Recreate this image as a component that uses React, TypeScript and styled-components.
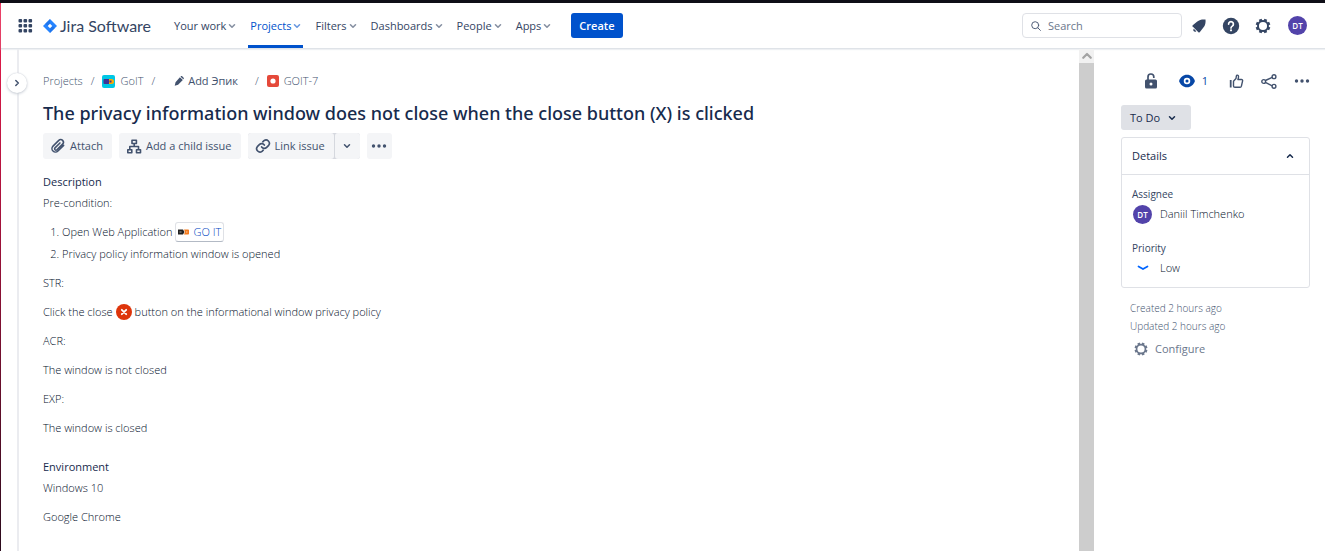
import React from "react";
import styled, { createGlobalStyle, css } from "styled-components";

const GlobalStyle = createGlobalStyle`
  *, *::before, *::after { box-sizing: border-box; }
  body { margin: 0; background: #fff; color: #172b4d; font: 11px/20px "Open Sans", "Noto Sans", sans-serif; }
  button, input { font: inherit; color: inherit; margin: 0; }
  button { border: 0; background: none; padding: 0; cursor: pointer; }
  a { color: inherit; text-decoration: none; }
  h1, h2, p, ol, dl, dd, dt { margin: 0; padding: 0; }
  svg { display: block; flex: none; }
`;

const Frame = styled.div`
  display: grid;
  grid-template-columns: 1px minmax(0, 1fr);
  grid-template-rows: 3px auto;
  min-height: 100vh;
`;
const TopEdge = styled.div`
  grid-column: 1 / -1;
  background: #0f0e17;
`;
const SideEdge = styled.div`
  background: linear-gradient(#ec1c4b, #b81440 30%, #2a0a1c);
`;
const Page = styled.div`
  display: flex;
  flex-direction: column;
`;

const Header = styled.header`
  display: flex;
  align-items: center;
  height: 46px;
  padding: 0 18px 0 17px;
  border-bottom: 1px solid #dfe3e8;
  box-shadow: 0 1px 1px #eef0f3;
  color: #344563;
`;
const Logo = styled.a`
  display: flex;
  align-items: center;
  gap: 3px;
  margin: 0 16px 0 10px;
  color: #344563;
  font: 16px/20px Lato, "Open Sans", sans-serif;
`;
const Nav = styled.nav`
  display: flex;
  align-self: stretch;
`;
const NavItem = styled.button<{ $active?: boolean }>`
  display: flex;
  align-items: center;
  gap: 2px;
  margin: 0 5px;
  padding: 0 2px;
  font-weight: 500;
  white-space: nowrap;
  border-top: 3px solid transparent;
  border-bottom: 3px solid transparent;
  ${(p) => p.$active && css`
    color: #0052cc;
    border-bottom-color: #0052cc;
  `}
  svg { opacity: 0.6; }
`;
const CreateButton = styled.button`
  height: 25px;
  margin-left: 13px;
  padding: 0 8px;
  border-radius: 3px;
  background: #0052cc;
  color: #fff;
  font-weight: 600;
`;
const SearchBox = styled.label`
  display: flex;
  align-items: center;
  gap: 7px;
  width: 160px;
  height: 25px;
  margin-left: auto;
  padding: 0 8px;
  border: 1px solid #dfe1e6;
  border-radius: 4px;
  color: #505f79;
  input {
    flex: 1;
    min-width: 0;
    padding: 0;
    border: 0;
    outline: 0;
    background: none;
  }
  input::placeholder { color: #6b778c; opacity: 1; }
`;
const HeaderIcons = styled.div`
  display: flex;
  align-items: center;
  gap: 14px;
  margin-left: 8px;
`;
const ProfileButton = styled.button`
  margin-left: 2px;
`;
const Avatar = styled.span`
  display: grid;
  place-items: center;
  flex: none;
  width: 19px;
  height: 19px;
  border-radius: 50%;
  background: #5243aa;
  color: #fff;
  font-size: 8px;
  font-weight: 600;
  line-height: 19px;
`;

const Body = styled.div`
  display: flex;
  flex: 1;
`;
const Rail = styled.div`
  position: relative;
  flex: none;
  width: 18px;
  border-right: 2px solid #ebecf0;
`;
const ExpandButton = styled.button`
  position: absolute;
  top: 24px;
  right: -10px;
  display: grid;
  place-items: center;
  width: 20px;
  height: 20px;
  border-radius: 50%;
  background: #fff;
  box-shadow: 0 0 1px #c1c7d0, 0 1px 3px #c9ced6;
  color: #42526e;
`;
const Issue = styled.main`
  flex: 1;
  min-width: 0;
  padding: 22px 24px 20px;
`;
const Breadcrumbs = styled.nav`
  display: flex;
  align-items: center;
  height: 20px;
  color: #42526e;
  font-weight: 300;
`;
const Crumb = styled.a`
  display: flex;
  align-items: center;
  gap: 5px;
`;
const Slash = styled.span`
  margin: 0 8px;
`;
const AddEpic = styled.button`
  display: flex;
  align-items: center;
  gap: 4px;
  margin: 0 9px 0 11px;
  color: #42526e;
  font-weight: 500;
`;
const Title = styled.h1`
  margin: 10px 0 8px;
  font-family: "Noto Sans", "Open Sans", sans-serif;
  font-size: 18px;
  font-weight: 500;
  line-height: 24px;
`;
const Toolbar = styled.div`
  display: flex;
  gap: 7px;
  margin-bottom: 13px;
`;
const ToolButton = styled.button<{ $iconOnly?: boolean }>`
  display: flex;
  align-items: center;
  justify-content: center;
  gap: 4px;
  min-width: 25px;
  height: 26px;
  padding: ${(p) => (p.$iconOnly ? "0 4px" : "0 9px 0 7px")};
  border-radius: 3px;
  background: #f4f5f7;
  color: #42526e;
  font-weight: 500;
  white-space: nowrap;
`;
const Split = styled.div`
  display: flex;
  gap: 1px;
  border-radius: 3px;
  background: #d5d8de;
`;
const SectionTitle = styled.h2`
  font-size: 11px;
  font-weight: 500;
  line-height: 20px;
`;
const Section = styled.section`
  & + & { margin-top: 19px; }
`;
const Rich = styled.div`
  display: grid;
  gap: 9px;
  margin-top: 1px;
  color: #04102b;
  font-weight: 300;
`;
const Steps = styled.ol`
  display: grid;
  gap: 2px;
  padding-left: 19px;
`;
const InlineRow = styled.p`
  display: flex;
  align-items: center;
  gap: 3px;
`;
const SmartLink = styled.a`
  display: inline-flex;
  align-items: center;
  gap: 4px;
  padding: 0 2px;
  border: 1px solid #dfe1e6;
  border-bottom-color: #b3bac5;
  border-radius: 3px;
  line-height: 18px;
  color: #0047c2;
`;

const Scrollbar = styled.div`
  flex: none;
  width: 15px;
  background: #cdcdcd;
`;
const ScrollArrow = styled.div`
  display: grid;
  place-items: center;
  height: 14px;
  background: #f1f1f1;
  color: #a3a3a3;
`;

const Aside = styled.aside`
  flex: none;
  width: 231px;
  padding: 22px 15px 0 27px;
`;
const Actions = styled.div`
  display: flex;
  align-items: center;
  justify-content: flex-end;
  gap: 17px;
  height: 20px;
  color: #42526e;
`;
const Watch = styled.button`
  display: flex;
  align-items: center;
  gap: 7px;
  margin: 0 4px;
  color: #0747a6;
`;
const Status = styled.button`
  display: flex;
  align-items: center;
  gap: 8px;
  height: 25px;
  margin: 14px 0 7px;
  padding: 0 15px 0 9px;
  border-radius: 3px;
  background: #dfe1e6;
  font-weight: 500;
`;
const Card = styled.section`
  border: 1px solid #dfe1e6;
  border-radius: 3px;
`;
const CardHead = styled.button`
  display: flex;
  align-items: center;
  justify-content: space-between;
  width: 100%;
  height: 37px;
  padding: 0 15px 0 10px;
  border-bottom: 1px solid #dfe1e6;
  font-weight: 500;
`;
const Fields = styled.dl`
  display: grid;
  gap: 14px;
  padding: 9px 10px;
`;
const FieldName = styled.dt`
  color: #344563;
  font-size: 10px;
  font-weight: 400;
`;
const FieldValue = styled.dd`
  display: flex;
  align-items: center;
  gap: 8px;
  padding-left: 1px;
  color: #04102b;
  font-weight: 300;
`;
const PriorityIcon = styled.span`
  display: grid;
  place-items: center;
  width: 19px;
`;
const Meta = styled.div`
  padding: 11px 9px 0;
  color: #42526e;
  font-size: 10px;
  font-weight: 300;
  line-height: 18px;
`;
const Configure = styled.button`
  display: flex;
  align-items: center;
  gap: 6px;
  margin-top: 4px;
  padding-left: 3px;
  color: #6b778c;
  font-size: 11px;
  line-height: 20px;
  font-weight: 500;
`;

const Chevron = ({ turn = 0, size = 8 }: { turn?: number; size?: number }) => (
  <svg width={size} height={size} viewBox="0 0 8 8" fill="none" stroke="currentColor" strokeWidth="1.5" strokeLinecap="round" strokeLinejoin="round">
    <path d="M1.500 2.800 4 5.300l2.500-2.500" transform={`rotate(${turn} 4 4)`} />
  </svg>
);
const Grid = () => (
  <svg width="15" height="14" viewBox="0 0 15 14" fill="currentColor">
    {[0, 5, 10].map((y) => [0, 5, 10].map((x) => <rect key={`${x}-${y}`} x={x + 0.5} y={y} width="3.600" height="3.600" rx="1" />))}
  </svg>
);
const JiraMark = () => (
  <svg width="14" height="14" viewBox="0 0 14 14">
    <path d="M7 0 14 7 7 14 0 7z" fill="#2684ff" />
    <path d="M7 0v4.500L4.500 7 2.200 4.800z" fill="#1868db" opacity=".5" />
    <path d="M7 14V9.500L9.500 7l2.300 2.200z" fill="#1868db" opacity=".5" />
    <path d="M7 4.700 9.300 7 7 9.300 4.700 7z" fill="#fff" />
  </svg>
);
const SearchIcon = () => (
  <svg width="10" height="10" viewBox="0 0 10 10" fill="none" stroke="currentColor" strokeLinecap="round">
    <circle cx="4.200" cy="4.200" r="3.500" />
    <path d="m6.800 6.800 2.600 2.600" />
  </svg>
);
const Bell = () => (
  <svg width="18" height="18" viewBox="0 0 18 18" fill="currentColor">
    <path d="M15.500 2.500c-3.200-.3-6.200.2-8.200 2L3 8c-.9.800-.7 1.700.2 2.100l4.700 4.700c.4.900 1.300 1 2 .1l3.500-4.300c1.800-2 2.500-4.900 2.100-8.100zM3.800 11.700l2.500 2.500c-.8.700-1.800.7-2.400.1-.7-.6-.8-1.800-.1-2.600z" />
  </svg>
);
const Help = () => (
  <svg width="18" height="18" viewBox="0 0 18 18">
    <circle cx="9" cy="9" r="8.200" fill="currentColor" />
    <path d="M6.600 7.100a2.400 2.400 0 1 1 3.700 2c-.8.500-1.300.9-1.300 1.800" fill="none" stroke="#fff" strokeWidth="1.700" strokeLinecap="round" />
    <circle cx="9" cy="13.300" r="1.100" fill="#fff" />
  </svg>
);
const Gear = ({ size = 18 }: { size?: number }) => (
  <svg width={size} height={size} viewBox="0 0 18 18" fill="none" stroke="currentColor">
    <circle cx="9" cy="9" r="5" strokeWidth="1.900" />
    {[22.5, 67.5, 112.5, 157.5, 202.5, 247.5, 292.5, 337.5].map((a) => (
      <path key={a} d="M9 1.700v2.500" strokeWidth="3" transform={`rotate(${a} 9 9)`} />
    ))}
  </svg>
);
const ProjectIcon = () => (
  <svg width="13" height="13" viewBox="0 0 13 13">
    <rect width="13" height="13" rx="2" fill="#00c7e5" />
    <rect x="1.500" y="4" width="6" height="5" rx="1" fill="#403294" />
    <path d="M7 4h2.500a2.500 2.500 0 0 1 0 5H7z" fill="#ffab00" />
    <rect x="7.500" y="5.500" width="2" height="2" fill="#403294" />
  </svg>
);
const Pencil = () => (
  <svg width="10" height="10" viewBox="0 0 11 11" fill="currentColor">
    <path d="m6.500 1.300 3.200 3.200-5.200 5.200-3.700 1 .9-3.900zM7.200.700l.4-.3c.5-.4 1-.4 1.400 0l1.600 1.500c.4.400.4.900 0 1.400l-.4.400z" />
  </svg>
);
const BugIcon = () => (
  <svg width="12" height="12" viewBox="0 0 12 12">
    <rect width="12" height="12" rx="2" fill="#e5493a" />
    <circle cx="6" cy="6" r="2.600" fill="#fff" />
  </svg>
);
const Clip = () => (
  <svg width="16" height="16" viewBox="0 0 24 24" fill="none" stroke="currentColor" strokeWidth="2.300" strokeLinecap="round" strokeLinejoin="round">
    <path d="m20.500 11-8.600 8.600a5.200 5.200 0 0 1-7.400-7.400l8.700-8.700a4 4 0 0 1 5.700 5.700l-8.500 8.500a2 2 0 0 1-2.900-2.900l7.400-7.400" />
  </svg>
);
const Tree = () => (
  <svg width="16" height="15" viewBox="0 0 16 15" fill="none" stroke="currentColor" strokeWidth="1.600" strokeLinejoin="round">
    <path d="M6 1.200h4.400v3.300H6zM1.800 10.700h4v3h-4zM10.500 10.700h4v3h-4zM8.200 4.500v3M3.800 10.500v-3h8.700v3" />
  </svg>
);
const LinkIcon = () => (
  <svg width="16" height="16" viewBox="0 0 24 24" fill="none" stroke="currentColor" strokeWidth="2.500" strokeLinecap="round" strokeLinejoin="round">
    <path d="M10 13.500a5 5 0 0 0 7.500.5l3-3a5 5 0 0 0-7-7L11.700 5.700M14 10.500a5 5 0 0 0-7.500-.5l-3 3a5 5 0 0 0 7 7l1.800-1.700" />
  </svg>
);
const Dots = () => (
  <svg width="16" height="6" viewBox="0 0 16 6" fill="currentColor">
    <circle cx="2.500" cy="3" r="1.700" />
    <circle cx="8" cy="3" r="1.700" />
    <circle cx="13.500" cy="3" r="1.700" />
  </svg>
);
const SiteIcon = () => (
  <svg width="11" height="6" viewBox="0 0 11 6">
    <path d="M0 .5h5l1.500 2.500L5 5.500H0z" fill="#222" />
    <path d="M6 .5h4.200q.8 0 .8.800v3.400q0 .8-.8.800H6L7 3z" fill="#f57c1f" />
    <path d="M1.500 3h2M8 3h1.500" stroke="#fff" opacity=".6" />
  </svg>
);
const Cross = () => (
  <svg width="16" height="16" viewBox="0 0 16 16">
    <circle cx="8" cy="8" r="8" fill="#de350b" />
    <path d="m5.800 5.800 4.400 4.400M10.200 5.800l-4.400 4.400" stroke="#fff" strokeWidth="1.800" strokeLinecap="round" />
  </svg>
);
const Lock = () => (
  <svg width="14" height="16" viewBox="0 0 14 16">
    <rect x="1" y="6.500" width="12" height="9" rx="1.500" fill="currentColor" />
    <path d="M4 7V4a2.900 2.900 0 0 1 5.800-.2V5" fill="none" stroke="currentColor" strokeWidth="1.700" />
    <circle cx="7" cy="11" r="1.500" fill="#fff" />
  </svg>
);
const Eye = () => (
  <svg width="16" height="14" viewBox="0 0 16 14">
    <path d="M8 .7c4 0 6.500 2.600 7.700 5.500q.3.800 0 1.600C14.500 10.700 12 13.300 8 13.300S1.500 10.700.3 7.800q-.3-.8 0-1.600C1.500 3.300 4 .7 8 .7z" fill="currentColor" />
    <circle cx="8" cy="7" r="2.400" fill="none" stroke="#fff" strokeWidth="1.700" />
  </svg>
);
const Thumb = () => (
  <svg width="15" height="15" viewBox="0 0 15 15" fill="none" stroke="currentColor" strokeWidth="1.400" strokeLinejoin="round">
    <path d="M1.700 6v7.500" strokeWidth="1.800" />
    <path d="M4.500 7.200 7 4.500l.4-2.700c.2-1 1.900-1 2.100.4.100 1-.2 2.300-.6 3.300h3.600c.8 0 1.300.6 1.100 1.300l-1.200 5.400c-.2.800-.6 1.100-1.300 1.100H6c-1 0-1.500-.5-1.500-1.400z" />
  </svg>
);
const Share = () => (
  <svg width="16" height="15" viewBox="0 0 16 15" fill="none" stroke="currentColor" strokeWidth="1.400">
    <path d="m4.400 6.500 6.800-3.200M4.400 8.400l6.800 3.400" />
    <circle cx="2.700" cy="7.500" r="1.900" />
    <circle cx="13" cy="2.700" r="1.900" />
    <circle cx="13" cy="12.300" r="1.900" />
  </svg>
);

const menu = ["Your work", "Projects", "Filters", "Dashboards", "People", "Apps"];

export default function App() {
  return (
    <>
      <GlobalStyle />
      <Frame>
        <TopEdge />
        <SideEdge />
        <Page>
          <Header>
            <button aria-label="Switch product"><Grid /></button>
            <Logo href="#"><JiraMark />Jira Software</Logo>
            <Nav>
              {menu.map((m) => (
                <NavItem key={m} $active={m === "Projects"}>{m}<Chevron /></NavItem>
              ))}
            </Nav>
            <CreateButton>Create</CreateButton>
            <SearchBox>
              <SearchIcon />
              <input type="text" placeholder="Search" aria-label="Search" />
            </SearchBox>
            <HeaderIcons>
              <button aria-label="Notifications"><Bell /></button>
              <button aria-label="Help"><Help /></button>
              <button aria-label="Settings"><Gear /></button>
              <ProfileButton aria-label="Profile"><Avatar>DT</Avatar></ProfileButton>
            </HeaderIcons>
          </Header>
          <Body>
            <Rail>
              <ExpandButton aria-label="Expand sidebar"><Chevron turn={-90} /></ExpandButton>
            </Rail>
            <Issue>
              <Breadcrumbs>
                <Crumb href="#">Projects</Crumb>
                <Slash>/</Slash>
                <Crumb href="#"><ProjectIcon />GoIT</Crumb>
                <Slash>/</Slash>
                <AddEpic><Pencil />Add Эпик</AddEpic>
                <Slash>/</Slash>
                <Crumb href="#"><BugIcon />GOIT-7</Crumb>
              </Breadcrumbs>
              <Title>The privacy information window does not close when the close button (X) is clicked</Title>
              <Toolbar>
                <ToolButton><Clip />Attach</ToolButton>
                <ToolButton><Tree />Add a child issue</ToolButton>
                <Split>
                  <ToolButton><LinkIcon />Link issue</ToolButton>
                  <ToolButton $iconOnly aria-label="More link options"><Chevron /></ToolButton>
                </Split>
                <ToolButton $iconOnly aria-label="More actions"><Dots /></ToolButton>
              </Toolbar>
              <Section>
                <SectionTitle>Description</SectionTitle>
                <Rich>
                  <p>Pre-condition:</p>
                  <Steps>
                    <li><InlineRow>Open Web Application <SmartLink href="#"><SiteIcon />GO IT</SmartLink></InlineRow></li>
                    <li>Privacy policy information window is opened</li>
                  </Steps>
                  <p>STR:</p>
                  <InlineRow>Click the close <Cross /> button on the informational window privacy policy</InlineRow>
                  <p>ACR:</p>
                  <p>The window is not closed</p>
                  <p>EXP:</p>
                  <p>The window is closed</p>
                </Rich>
              </Section>
              <Section>
                <SectionTitle>Environment</SectionTitle>
                <Rich>
                  <p>Windows 10</p>
                  <p>Google Chrome</p>
                </Rich>
              </Section>
            </Issue>
            <Scrollbar><ScrollArrow><Chevron turn={180} size={12} /></ScrollArrow></Scrollbar>
            <Aside>
              <Actions>
                <button aria-label="Restrict"><Lock /></button>
                <Watch aria-label="Watchers"><Eye />1</Watch>
                <button aria-label="Vote"><Thumb /></button>
                <button aria-label="Share"><Share /></button>
                <button aria-label="More"><Dots /></button>
              </Actions>
              <Status>To Do<Chevron /></Status>
              <Card>
                <CardHead>Details<Chevron turn={180} /></CardHead>
                <Fields>
                  <div>
                    <FieldName>Assignee</FieldName>
                    <FieldValue><Avatar>DT</Avatar>Daniil Timchenko</FieldValue>
                  </div>
                  <div>
                    <FieldName>Priority</FieldName>
                    <FieldValue>
                      <PriorityIcon>
                        <svg width="12" height="6" viewBox="0 0 12 6" fill="none" stroke="#0065ff" strokeWidth="1.700" strokeLinecap="round"><path d="m1.500 1.500 4.500 2.600 4.500-2.600" /></svg>
                      </PriorityIcon>
                      Low
                    </FieldValue>
                  </div>
                </Fields>
              </Card>
              <Meta>
                <p>Created 2 hours ago</p>
                <p>Updated 2 hours ago</p>
                <Configure><Gear size={16} />Configure</Configure>
              </Meta>
            </Aside>
          </Body>
        </Page>
      </Frame>
    </>
  );
}
